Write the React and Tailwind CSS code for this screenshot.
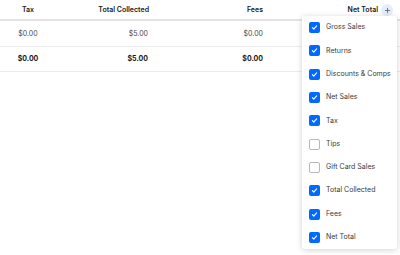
import React from 'react';

const options = [
    { label: 'Gross Sales', on: true },
    { label: 'Returns', on: true },
    { label: 'Discounts & Comps', on: true },
    { label: 'Net Sales', on: true },
    { label: 'Tax', on: true },
    { label: 'Tips', on: false },
    { label: 'Gift Card Sales', on: false },
    { label: 'Total Collected', on: true },
    { label: 'Fees', on: true },
    { label: 'Net Total', on: true },
];

const Check = ({ on }) =>
    on ? (
        <span className="w-[11px] h-[11px] rounded-[2px] bg-[#006aff] flex items-center justify-center">
            <svg width="7" height="7" viewBox="0 0 10 10" fill="none">
                <path d="M2 5.2l2 2 4-4.4" stroke="white" strokeWidth="1.6" strokeLinecap="round" strokeLinejoin="round" />
            </svg>
        </span>
    ) : (
        <span className="w-[11px] h-[11px] rounded-[2px] border border-[#b8b8b8] bg-white" />
    );

const Row = ({ bold, cells }) => (
    <div className={`flex h-[25px] items-center border-b border-[#ececec] text-[7px] ${bold ? 'font-bold text-[#1a1a1a]' : 'text-[#4a4a4a]'}`}>
        <div className="w-[56px] text-center">{cells[0]}</div>
        <div className="w-[92px] text-right">{cells[1]}</div>
        <div className="w-[115px] text-right">{cells[2]}</div>
    </div>
);

export default function App() {
    return (
        <div className="relative w-[400px] h-[255px] bg-white overflow-hidden" style={{ fontFamily: 'Inter, "Liberation Sans", sans-serif' }}>
            <div className="flex h-[21px] items-center text-[7px] font-semibold text-[#1a1a1a] border-b-2 border-[#e4e4e4] pt-[1px]">
                <div className="w-[56px] text-center">Tax</div>
                <div className="w-[93px] text-right">Total Collected</div>
                <div className="w-[114px] text-right">Fees</div>
                <div className="w-[115px] text-right">Net Total</div>
                <div className="ml-[3px] w-[12px] h-[12px] rounded-full bg-[#e5edfb] flex items-center justify-center">
                    <svg width="7" height="7" viewBox="0 0 8 8">
                        <path d="M4 1v6M1 4h6" stroke="#6b6b6b" strokeWidth="1" />
                    </svg>
                </div>
            </div>
            <div className="pt-[1px]">
                <Row cells={['$0.00', '$5.00', '$0.00']} />
                <Row bold cells={['$0.00', '$5.00', '$0.00']} />
            </div>

            {/* column picker */}
            <div className="absolute left-[302px] top-[16px] w-[95px] h-[233px] bg-white rounded-[3px] shadow-[0_1px_6px_rgba(0,0,0,0.18)]">
                {options.map((o) => (
                    <div key={o.label} className="flex items-center h-[23.3px] pl-[7px] gap-[6px] text-[7px] text-[#3a3a3a]">
                        <Check on={o.on} />
                        <span>{o.label}</span>
                    </div>
                ))}
            </div>
        </div>
    );
}
